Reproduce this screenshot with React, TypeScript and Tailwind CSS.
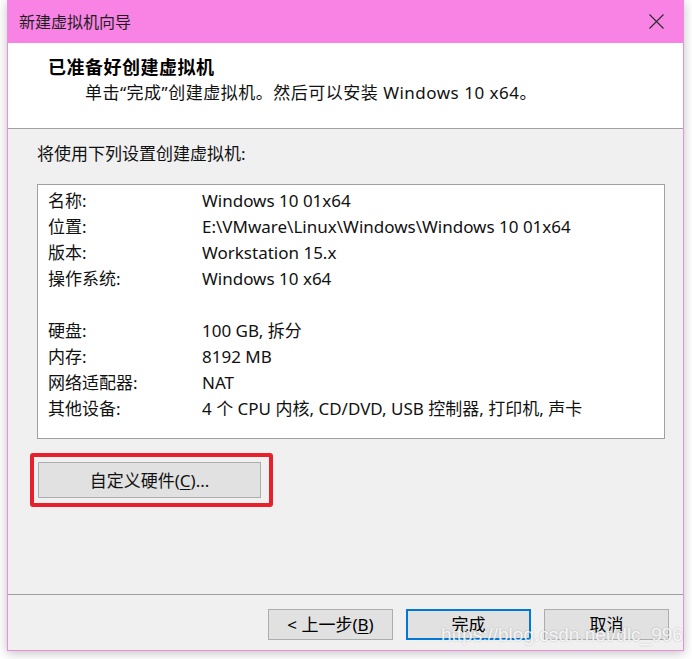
const FONT = "font-['Noto_Sans','Noto_Sans_CJK_SC',sans-serif]"

const ROWS: [string, string][] = [
  ['名称:', 'Windows 10 01x64'],
  ['位置:', 'E:\\VMware\\Linux\\Windows\\Windows 10 01x64'],
  ['版本:', 'Workstation 15.x'],
  ['操作系统:', 'Windows 10 x64'],
  ['', ''],
  ['硬盘:', '100 GB, 拆分'],
  ['内存:', '8192 MB'],
  ['网络适配器:', 'NAT'],
  ['其他设备:', '4 个 CPU 内核, CD/DVD, USB 控制器, 打印机, 声卡'],
]

function WinButton({ children, primary = false }: { children: React.ReactNode; primary?: boolean }) {
  return (
    <div
      className={
        'w-[125px] h-[31px] flex items-center justify-center bg-[#e1e1e1] text-[17px] leading-none text-black ' +
        (primary ? 'border-2 border-[#0078d7]' : 'border border-[#adadad]')
      }
    >
      {children}
    </div>
  )
}

export default function App() {
  return (
    <div className={`w-[692px] h-[659px] bg-white overflow-hidden relative ${FONT}`}>
      <div className="ml-[7px] w-[677px] h-[651px] flex flex-col bg-[#f0f0f0] border-x border-b border-[#ea8fdc] shadow-[0_2px_10px_rgba(0,0,0,0.25)]">

        {/* title bar */}
        <div className="h-[43px] shrink-0 bg-[#f983e5] flex items-center justify-between pl-[11px] pr-[19px]">
          <span className="text-[16px] leading-none text-[#1e1e1e]">新建虚拟机向导</span>
          <svg width="15" height="15" viewBox="0 0 15 15">
            <path d="M0.5 0.5 L14.5 14.5 M14.5 0.5 L0.5 14.5" stroke="#2a2a2a" strokeWidth="1.1" />
          </svg>
        </div>

        {/* header */}
        <div className="h-[85px] shrink-0 bg-white pt-[12px]">
          <div className="pl-[40px] text-[18px] leading-[24px] font-bold text-black tracking-[0.5px]">已准备好创建虚拟机</div>
          <div className="mt-[2px] pl-[77px] text-[17px] leading-[24px] text-[#111] tracking-[0.5px]">
            单击“完成”创建虚拟机。然后可以安装 Windows 10 x64。
          </div>
        </div>
        <div className="h-px shrink-0 bg-[#a0a0a0]" />

        {/* body */}
        <div className="flex-1 flex flex-col pt-[13px]">
          <div className="pl-[29px] text-[17px] leading-[24px] text-[#111]">将使用下列设置创建虚拟机:</div>

          <div className="mt-[18px] ml-[29px] w-[628px] h-[255px] bg-white border border-[#a0a0a0] pt-[2px] pl-[10px]">
            {ROWS.map(([label, value], i) => (
              <div key={i} className="h-[26px] flex items-center text-[17px] leading-none text-[#111]">
                <span className="w-[154px] shrink-0">{label}</span>
                <span>{value}</span>
              </div>
            ))}
          </div>

          <div className="mt-[14px] ml-[22px] w-[243px] h-[54px] border-4 border-[#e8202c] rounded-[3px] px-[4px] py-[5px]">
            <div className="w-[223px] h-[36px] flex items-center justify-center bg-[#e1e1e1] border border-[#adadad] text-[17px] leading-none text-[#111]">
              自定义硬件(<span className="underline underline-offset-2">C</span>)...
            </div>
          </div>
        </div>

        {/* footer */}
        <div className="h-px shrink-0 bg-[#a0a0a0]" />
        <div className="h-[55px] shrink-0 flex justify-end items-start gap-[13px] pt-[14px] pr-[14px]">
          <WinButton>
            &lt; 上一步(<span className="underline underline-offset-2">B</span>)
          </WinButton>
          <WinButton primary>完成</WinButton>
          <WinButton>取消</WinButton>
        </div>
      </div>

      {/* watermark */}
      <div className="absolute left-[441px] top-[623px] font-['Liberation_Sans',sans-serif] text-[19px] leading-[24px] text-white/85 [text-shadow:0_0_2px_rgba(0,0,0,0.25)]">
        https://blog.csdn.net/dlc_996
      </div>
    </div>
  )
}
